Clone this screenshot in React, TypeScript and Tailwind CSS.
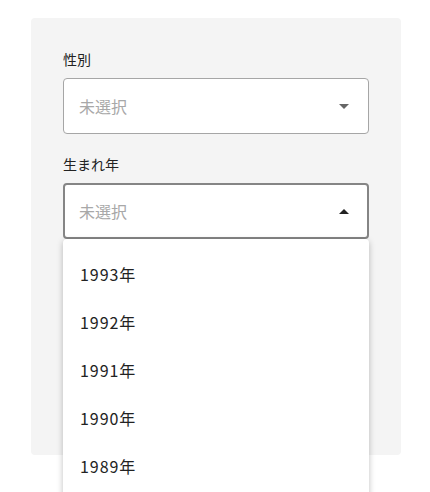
import React from "react";

const font = { fontFamily: '"Noto Sans CJK JP", "Noto Sans", sans-serif' };

function Arrow({ up, color }: { up?: boolean; color: string }) {
  return (
    <svg width="10" height="5" viewBox="0 0 10 5" className="shrink-0">
      {up ? <path d="M0 5 L5 0 L10 5 Z" fill={color} /> : <path d="M0 0 L5 5 L10 0 Z" fill={color} />}
    </svg>
  );
}

export default function App() {
  const years = ["1993年", "1992年", "1991年", "1990年", "1989年"];
  return (
    <div className="w-[430px] h-[492px] bg-white overflow-hidden relative" style={font}>
      <div className="ml-[31px] mt-[18px] w-[370px] h-[437px] bg-[#f4f4f4] rounded-[4px] px-[32px] pt-[31px]">
        <div className="text-[14px] leading-[20px] text-[#222] mb-[9px]">性別</div>
        <div className="h-[56px] w-[306px] bg-white border border-[#a6a6a6] rounded-[4px] flex items-center pl-[15px] pr-[19px] justify-between">
          <span className="text-[16px] text-[#a8a8a8]">未選択</span>
          <Arrow color="#666" />
        </div>
        <div className="text-[14px] leading-[20px] text-[#222] mt-[20px] mb-[9px]">生まれ年</div>
        <div className="relative w-[306px]">
          <div className="h-[56px] w-[306px] bg-white border-2 border-[#858585] rounded-[4px] flex items-center pl-[14px] pr-[18px] justify-between">
            <span className="text-[16px] text-[#a8a8a8]">未選択</span>
            <Arrow up color="#222" />
          </div>
          <div className="absolute left-0 top-[56px] w-[306px] h-[300px] bg-white rounded-[4px] shadow-[0_2px_6px_rgba(0,0,0,0.25)] pt-[11px]">
            {years.map((y) => (
              <div key={y} className="h-[48px] flex items-center pl-[17px] text-[16px] text-[#222] tracking-[0.06em]">
                {y}
              </div>
            ))}
          </div>
        </div>
      </div>
    </div>
  );
}
